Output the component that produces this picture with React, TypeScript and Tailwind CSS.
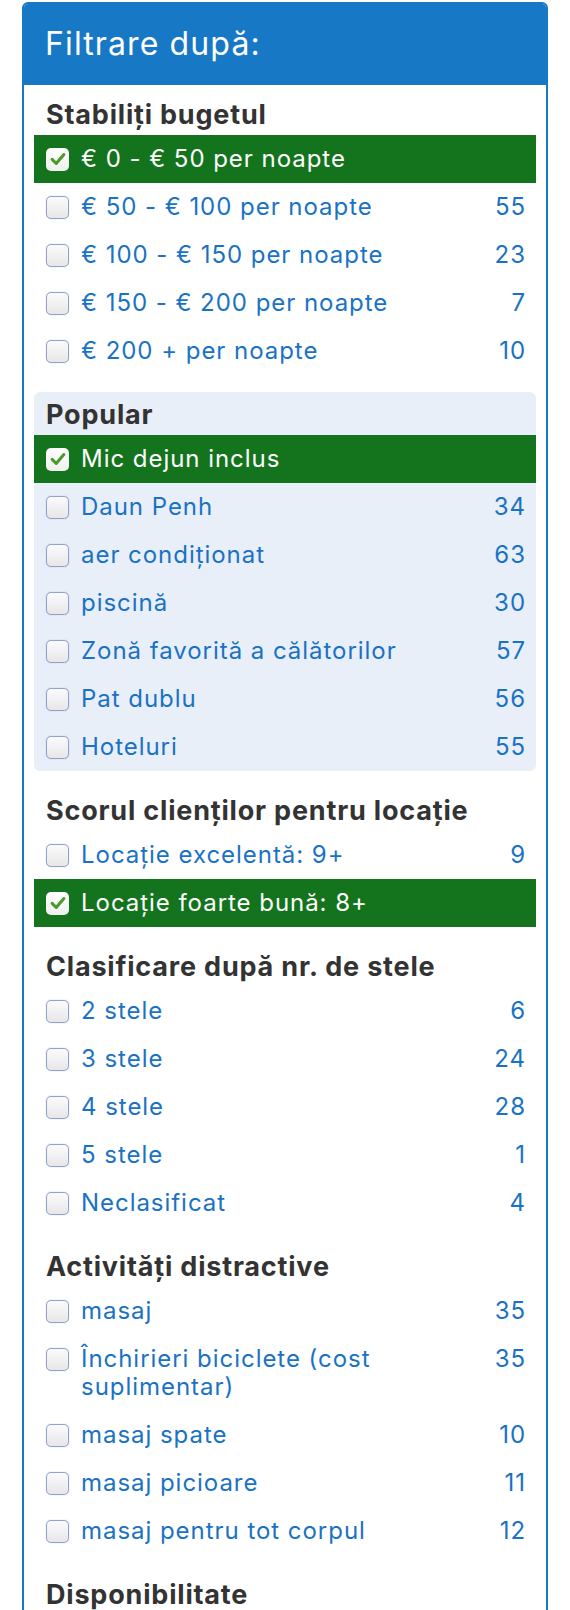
type Item = { label: string; count?: number; checked?: boolean };

const sections: { title: string; shaded?: boolean; items: Item[] }[] = [
  {
    title: "Stabiliți bugetul",
    items: [
      { label: "€ 0 - € 50 per noapte", checked: true },
      { label: "€ 50 - € 100 per noapte", count: 55 },
      { label: "€ 100 - € 150 per noapte", count: 23 },
      { label: "€ 150 - € 200 per noapte", count: 7 },
      { label: "€ 200 + per noapte", count: 10 },
    ],
  },
  {
    title: "Popular",
    shaded: true,
    items: [
      { label: "Mic dejun inclus", checked: true },
      { label: "Daun Penh", count: 34 },
      { label: "aer condiționat", count: 63 },
      { label: "piscină", count: 30 },
      { label: "Zonă favorită a călătorilor", count: 57 },
      { label: "Pat dublu", count: 56 },
      { label: "Hoteluri", count: 55 },
    ],
  },
  {
    title: "Scorul clienților pentru locație",
    items: [
      { label: "Locație excelentă: 9+", count: 9 },
      { label: "Locație foarte bună: 8+", checked: true },
    ],
  },
  {
    title: "Clasificare după nr. de stele",
    items: [
      { label: "2 stele", count: 6 },
      { label: "3 stele", count: 24 },
      { label: "4 stele", count: 28 },
      { label: "5 stele", count: 1 },
      { label: "Neclasificat", count: 4 },
    ],
  },
  {
    title: "Activități distractive",
    items: [
      { label: "masaj", count: 35 },
      { label: "Închirieri biciclete (cost suplimentar)", count: 35 },
      { label: "masaj spate", count: 10 },
      { label: "masaj picioare", count: 11 },
      { label: "masaj pentru tot corpul", count: 12 },
    ],
  },
  {
    title: "Disponibilitate",
    items: [],
  },
];

function Checkbox({ checked }: { checked?: boolean }) {
  if (checked) {
    return (
      <span className="flex h-[23px] w-[23px] shrink-0 items-center justify-center rounded-[5px] bg-gradient-to-b from-white to-[#eef0ee]">
        <svg viewBox="0 0 20 20" className="h-[18px] w-[18px]">
          <path
            d="M3.5 10.5 L8 15 L16.5 5"
            fill="none"
            stroke="#4a9a2c"
            strokeWidth="3.4"
            strokeLinecap="round"
            strokeLinejoin="round"
          />
        </svg>
      </span>
    );
  }
  return (
    <span className="block h-[23px] w-[23px] shrink-0 rounded-[5px] border border-[#93a2cc] bg-gradient-to-b from-[#fbfbfb] to-[#e7e7e7] shadow-[0_0_1px_rgba(60,80,160,0.5)]" />
  );
}

function Row({ item }: { item: Item }) {
  return (
    <div
      className={
        item.checked
          ? "flex items-start bg-[#13741d] py-[10px] pl-3 pr-[10px] text-white"
          : "flex items-start py-[10px] pl-3 pr-[10px] text-[#1a72c4]"
      }
    >
      <span className="flex h-[28px] items-center">
        <Checkbox checked={item.checked} />
      </span>
      <span className="ml-3 min-w-0 flex-1">{item.label}</span>
      {item.count !== undefined && <span className="ml-4 shrink-0">{item.count}</span>}
    </div>
  );
}

export default function App() {
  return (
    <div
      className="min-h-screen bg-white pt-[2px] text-[24px] leading-[28px] tracking-[0.04em]"
      style={{ fontFamily: "Inter, 'Liberation Sans', sans-serif" }}
    >
      <div className="mx-[22px] overflow-hidden rounded-t-[6px] border-2 border-[#1778c6]">
        <div className="flex h-[81px] items-center bg-[#1778c6] px-[21px] pb-[2px] text-[32px] leading-[40px] tracking-[0.035em] text-white">
          Filtrare după:
        </div>
        <div className="flex flex-col gap-[17px] px-[10px] pt-[7px] pb-4">
          {sections.map((s) => (
            <div
              key={s.title}
              className={s.shaded ? "rounded-[6px] bg-[#e9eff9] pt-[9px]" : "pt-[9px]"}
            >
              <div className="mb-[6px] px-3 text-[27px] font-bold leading-[28px] tracking-[0.03em] text-[#333333]">
                {s.title}
              </div>
              {s.items.map((it) => (
                <Row key={it.label} item={it} />
              ))}
            </div>
          ))}
        </div>
      </div>
    </div>
  );
}
